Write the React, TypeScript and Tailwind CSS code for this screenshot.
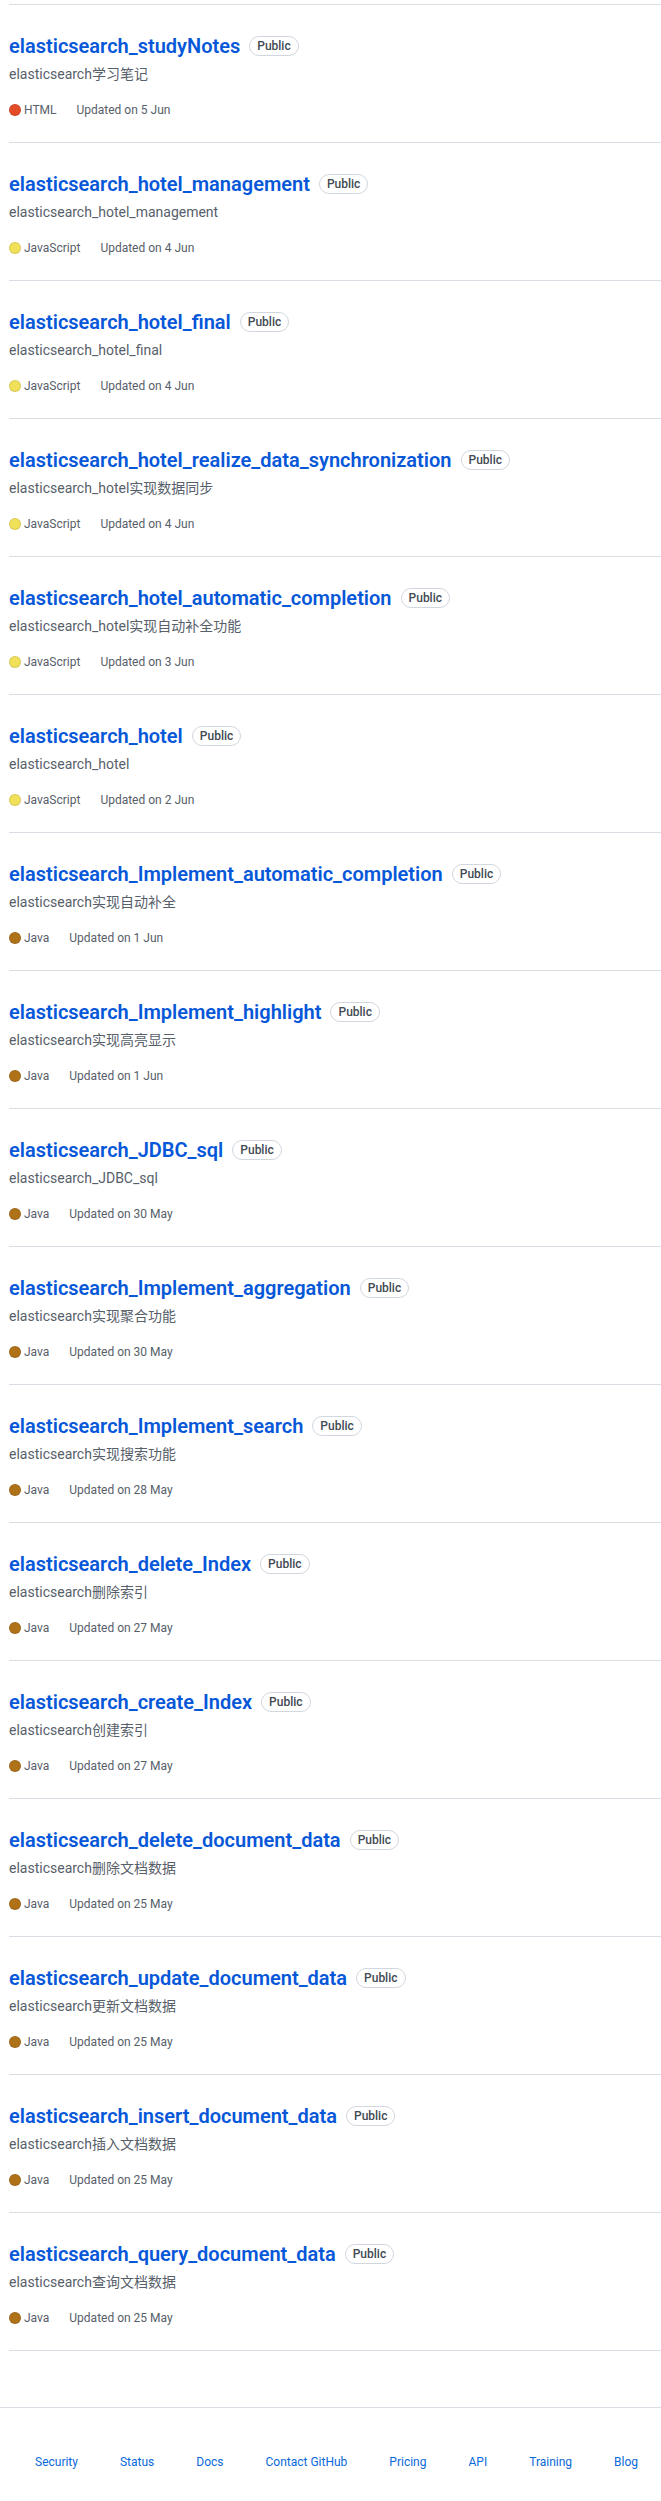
const repos: {
  name: string;
  desc: string;
  lang: "HTML" | "JavaScript" | "Java";
  updated: string;
}[] = [
  { name: "elasticsearch_studyNotes", desc: "elasticsearch学习笔记", lang: "HTML", updated: "5 Jun" },
  { name: "elasticsearch_hotel_management", desc: "elasticsearch_hotel_management", lang: "JavaScript", updated: "4 Jun" },
  { name: "elasticsearch_hotel_final", desc: "elasticsearch_hotel_final", lang: "JavaScript", updated: "4 Jun" },
  { name: "elasticsearch_hotel_realize_data_synchronization", desc: "elasticsearch_hotel实现数据同步", lang: "JavaScript", updated: "4 Jun" },
  { name: "elasticsearch_hotel_automatic_completion", desc: "elasticsearch_hotel实现自动补全功能", lang: "JavaScript", updated: "3 Jun" },
  { name: "elasticsearch_hotel", desc: "elasticsearch_hotel", lang: "JavaScript", updated: "2 Jun" },
  { name: "elasticsearch_Implement_automatic_completion", desc: "elasticsearch实现自动补全", lang: "Java", updated: "1 Jun" },
  { name: "elasticsearch_Implement_highlight", desc: "elasticsearch实现高亮显示", lang: "Java", updated: "1 Jun" },
  { name: "elasticsearch_JDBC_sql", desc: "elasticsearch_JDBC_sql", lang: "Java", updated: "30 May" },
  { name: "elasticsearch_Implement_aggregation", desc: "elasticsearch实现聚合功能", lang: "Java", updated: "30 May" },
  { name: "elasticsearch_Implement_search", desc: "elasticsearch实现搜索功能", lang: "Java", updated: "28 May" },
  { name: "elasticsearch_delete_Index", desc: "elasticsearch删除索引", lang: "Java", updated: "27 May" },
  { name: "elasticsearch_create_Index", desc: "elasticsearch创建索引", lang: "Java", updated: "27 May" },
  { name: "elasticsearch_delete_document_data", desc: "elasticsearch删除文档数据", lang: "Java", updated: "25 May" },
  { name: "elasticsearch_update_document_data", desc: "elasticsearch更新文档数据", lang: "Java", updated: "25 May" },
  { name: "elasticsearch_insert_document_data", desc: "elasticsearch插入文档数据", lang: "Java", updated: "25 May" },
  { name: "elasticsearch_query_document_data", desc: "elasticsearch查询文档数据", lang: "Java", updated: "25 May" },
];

const langDot = {
  HTML: "bg-[#e34c26]",
  JavaScript: "bg-[#f1e05a]",
  Java: "bg-[#b07219]",
};

const footerLinks = ["Security", "Status", "Docs", "Contact GitHub", "Pricing", "API", "Training", "Blog"];

function RepoItem({ r }: { r: (typeof repos)[number] }) {
  return (
    <li className="border-b border-[#d8dee4] pt-[26px] pb-[23px]">
      <div className="flex h-[30px] items-center">
        <a href="#" className="text-[20px] font-semibold leading-[30px] text-[#0757d9]">
          {r.name}
        </a>
        <span className="ml-[9px] rounded-full border border-[#d0d7de] px-[7px] text-[12px] font-medium leading-[18px] text-[#424a53]">
          Public
        </span>
      </div>
      <p className="mt-[3px] text-[14px] leading-[20px] text-[#57606a]">{r.desc}</p>
      <div className="mt-[17px] flex items-center gap-5 text-[12px] leading-[18px] text-[#57606a]">
        <span className="flex items-center gap-[3px]">
          <span className={`inline-block h-3 w-3 rounded-full border border-black/10 ${langDot[r.lang]}`} />
          {r.lang}
        </span>
        <span>Updated on {r.updated}</span>
      </div>
    </li>
  );
}

export default function App() {
  return (
    <div className="min-h-[2501px] bg-white font-['Roboto','Noto_Sans_CJK_SC',sans-serif] text-[#24292f]">
      <div className="pl-[9px] pt-[4px]">
        <ul className="border-t border-[#d8dee4]">
          {repos.map((r) => (
            <RepoItem key={r.name} r={r} />
          ))}
        </ul>
      </div>

      <footer className="mt-[56px] border-t border-[#d8dee4] pt-[45px] pb-[30px]">
        <ul className="flex gap-[42px] whitespace-nowrap pl-[35px] text-[12px] leading-[18px] text-[#0969da]">
          {footerLinks.map((l) => (
            <li key={l}>
              <a href="#">{l}</a>
            </li>
          ))}
        </ul>
      </footer>
    </div>
  );
}
